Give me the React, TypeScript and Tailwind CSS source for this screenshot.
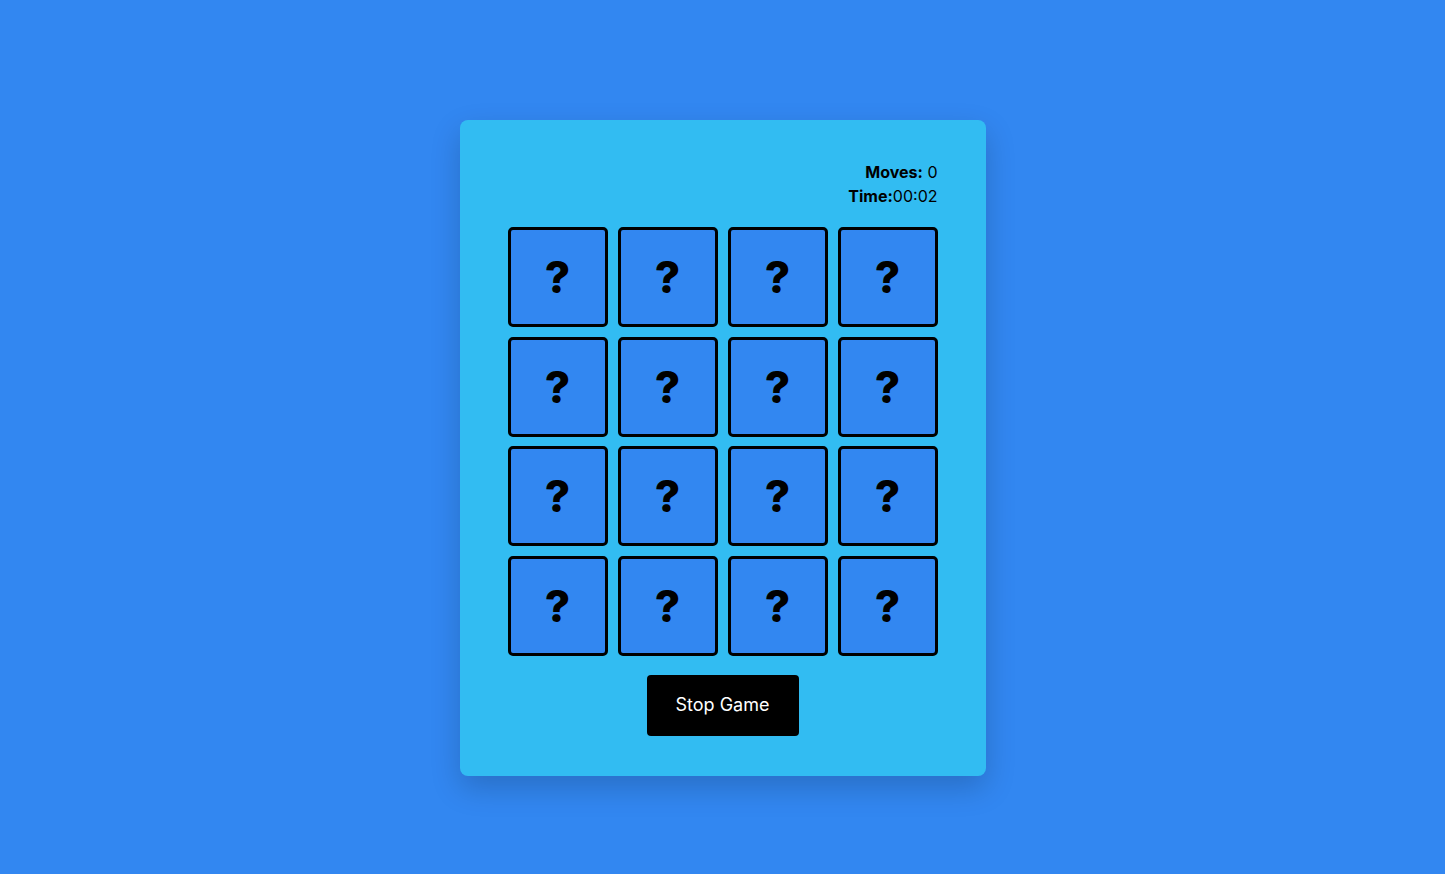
import React from 'react'

const App = () => {
  const tiles = Array.from({ length: 16 }, (_, i) => i)

  return (
    <div className="min-h-screen w-full bg-[#3287f1] flex justify-center pt-[120px] font-['Inter','Open_Sans',sans-serif]">
      <div className="w-[526px] h-[656px] bg-[#32bcf2] rounded-lg px-12 pt-10 pb-10 shadow-[0_12px_30px_rgba(0,0,0,0.18)] flex flex-col">
        {/* Stats */}
        <div className="flex flex-col items-end text-base leading-6 text-black">
          <div>
            <span className="font-bold">Moves:</span> 0
          </div>
          <div>
            <span className="font-bold">Time:</span>00:02
          </div>
        </div>

        {/* Board */}
        <div className="grid grid-cols-4 gap-x-2.5 gap-y-[9.6px] mt-[19px]">
          {tiles.map((t) => (
            <div
              key={t}
              className="w-[100px] h-[100px] bg-[#3287f1] border-[3px] border-black rounded-[5px] flex items-center justify-center"
            >
              <span className="text-[44px] leading-none font-extrabold text-black">?</span>
            </div>
          ))}
        </div>

        {/* Button */}
        <div className="flex justify-center mt-[19px]">
          <button className="w-[152px] h-[61px] bg-black text-white text-lg rounded-[4px]">
            Stop Game
          </button>
        </div>
      </div>
    </div>
  )
}

export default App
